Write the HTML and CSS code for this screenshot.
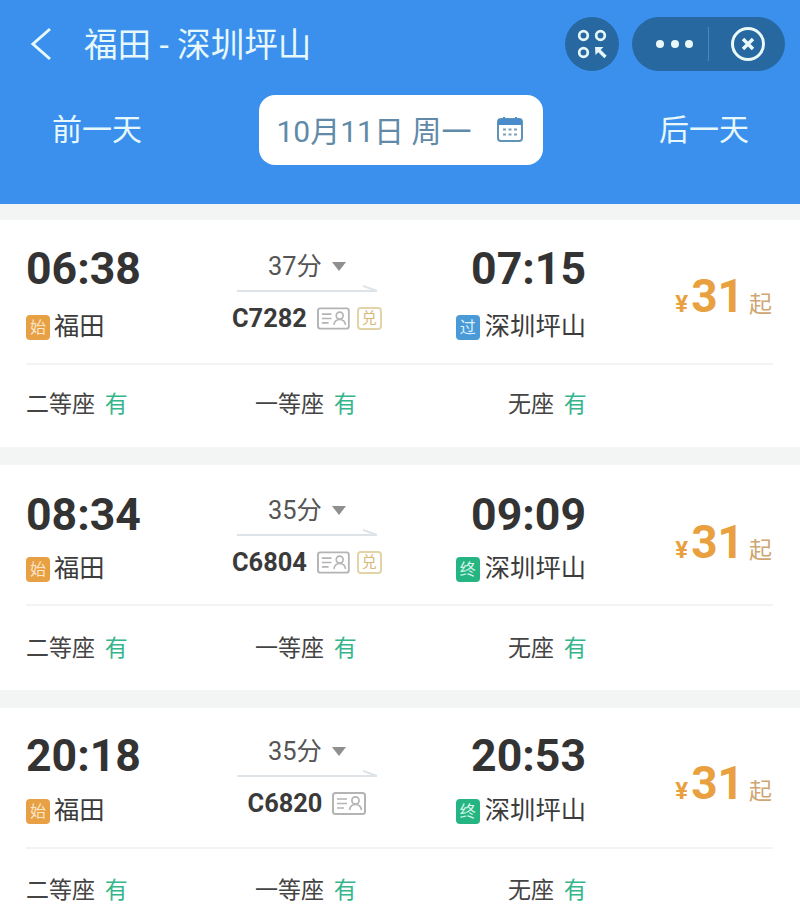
FILE: index.html
```html
<!DOCTYPE html>
<html>

<head>
    <title>福田 - 深圳坪山</title>
    <link rel="stylesheet" href="styles.css">
</head>

<body>
    <svg class="sprites" width="0" height="0">
        <symbol id="idcard" viewBox="0 0 34 23">
            <rect x="1" y="1" width="32" height="21" rx="2.5" fill="none" stroke="#b4b4b4" stroke-width="2" />
            <path d="M5 7h10M5 11.500h10M5 16h7" fill="none" stroke="#b4b4b4" stroke-width="1.7" />
            <circle cx="23.500" cy="8.500" r="3.600" fill="none" stroke="#b4b4b4" stroke-width="1.700" />
            <path d="M17.500 18c.6-4 3-5.500 6-5.500s5.400 1.500 6 5.500" fill="none" stroke="#b4b4b4" stroke-width="1.700" />
        </symbol>
    </svg>

    <header class="topbar">
        <div class="nav-row">
            <svg class="back" width="24" height="34" viewBox="0 0 24 34">
                <path d="M21 2 L4 17 L21 32" fill="none" stroke="#e6f8fb" stroke-width="3" />
            </svg>
            <h1 class="route">福田 - 深圳坪山</h1>
            <div class="round-btn">
                <svg width="32" height="32" viewBox="0 0 32 32">
                    <circle cx="7.500" cy="7.500" r="4.300" fill="none" stroke="#e6f6f8" stroke-width="2.700" />
                    <circle cx="24.500" cy="7.500" r="4.300" fill="none" stroke="#e6f6f8" stroke-width="2.700" />
                    <circle cx="7.500" cy="24.500" r="4.300" fill="none" stroke="#e6f6f8" stroke-width="2.700" />
                    <path d="M19 19h8.500l-2.800 2.800 6 6-2.400 2.400-6-6-2.800 2.800z" fill="#e6f6f8" />
                </svg>
            </div>
            <div class="capsule">
                <div class="dots"><i></i><i></i><i></i></div>
                <div class="capsule-sep"></div>
                <svg width="36" height="36" viewBox="0 0 36 36">
                    <circle cx="18" cy="18" r="15.500" fill="none" stroke="#eaf8f8" stroke-width="3" />
                    <path d="M13 13l10 10M23 13l-10 10" fill="none" stroke="#eaf8f8" stroke-width="3.500" />
                </svg>
            </div>
        </div>
        <div class="date-row">
            <span class="day-link">前一天</span>
            <div class="date-pill">
                <span>10月11日 周一</span>
                <svg width="28" height="26" viewBox="0 0 28 26">
                    <rect x="2" y="3" width="24" height="22" rx="3" fill="none" stroke="#5f93b8" stroke-width="2" />
                    <path d="M2 5.500a2.500 2.500 0 0 1 2.500-2.500h19a2.500 2.500 0 0 1 2.500 2.500v3.500h-24z" fill="#4a8ccb" />
                    <path d="M8 1v4M20 1v4" stroke="#4a8ccb" stroke-width="2" />
                    <path d="M7 13.500h3M12.500 13.500h3M18 13.500h3M7 18.500h3M12.500 18.500h3M18 18.500h3" stroke="#7f9fb5" stroke-width="2" />
                </svg>
            </div>
            <span class="day-link">后一天</span>
        </div>
    </header>

    <main class="list">
        <section class="train train-first">
            <div class="train-info">
                <div class="stop">
                    <div class="time">06:38</div>
                    <div class="station"><span class="tag tag-start">始</span>福田</div>
                </div>
                <div class="middle">
                    <div class="duration">37分<i class="caret"></i></div>
                    <div class="arrow-line"></div>
                    <div class="code">C7282<svg class="idcard"><use href="#idcard" /></svg><span class="dui">兑</span></div>
                </div>
                <div class="stop stop-end">
                    <div class="time">07:15</div>
                    <div class="station"><span class="tag tag-pass">过</span>深圳坪山</div>
                </div>
                <div class="price"><small>¥</small><b>31</b><em>起</em></div>
            </div>
            <div class="seats">
                <span>二等座 <u>有</u></span>
                <span>一等座 <u>有</u></span>
                <span>无座 <u>有</u></span>
            </div>
        </section>

        <section class="train train-second">
            <div class="train-info">
                <div class="stop">
                    <div class="time">08:34</div>
                    <div class="station"><span class="tag tag-start">始</span>福田</div>
                </div>
                <div class="middle">
                    <div class="duration">35分<i class="caret"></i></div>
                    <div class="arrow-line"></div>
                    <div class="code">C6804<svg class="idcard"><use href="#idcard" /></svg><span class="dui">兑</span></div>
                </div>
                <div class="stop stop-end">
                    <div class="time">09:09</div>
                    <div class="station"><span class="tag tag-end">终</span>深圳坪山</div>
                </div>
                <div class="price"><small>¥</small><b>31</b><em>起</em></div>
            </div>
            <div class="seats">
                <span>二等座 <u>有</u></span>
                <span>一等座 <u>有</u></span>
                <span>无座 <u>有</u></span>
            </div>
        </section>

        <section class="train train-third">
            <div class="train-info">
                <div class="stop">
                    <div class="time">20:18</div>
                    <div class="station"><span class="tag tag-start">始</span>福田</div>
                </div>
                <div class="middle">
                    <div class="duration">35分<i class="caret"></i></div>
                    <div class="arrow-line"></div>
                    <div class="code">C6820<svg class="idcard"><use href="#idcard" /></svg></div>
                </div>
                <div class="stop stop-end">
                    <div class="time">20:53</div>
                    <div class="station"><span class="tag tag-end">终</span>深圳坪山</div>
                </div>
                <div class="price"><small>¥</small><b>31</b><em>起</em></div>
            </div>
            <div class="seats">
                <span>二等座 <u>有</u></span>
                <span>一等座 <u>有</u></span>
                <span>无座 <u>有</u></span>
            </div>
        </section>
    </main>
</body>

</html>
```

FILE: styles.css
```css
* {
    padding: 0;
    margin: 0;
    box-sizing: border-box;
}

html,
body {
    height: 100%;
    overflow: hidden;
}

body {
    background-color: #f3f4f4;
    font-family: Roboto, "Noto Sans CJK SC", sans-serif;
    color: #333;
}

.sprites {
    display: block;
    height: 0;
}

.topbar {
    height: 204px;
    background-color: #3a90ec;
    color: #e6f8fb;
    padding-top: 17px;
}

.nav-row {
    display: flex;
    align-items: center;
    height: 54px;
    padding: 0 15px 0 29px;
}

.route {
    font-size: 33.6px;
    font-weight: 400;
    margin-left: 31px;
    padding-bottom: 4px;
    flex: 1;
}

.round-btn {
    width: 54px;
    height: 54px;
    border-radius: 50%;
    background-color: #26689f;
    display: flex;
    align-items: center;
    justify-content: center;
    margin-right: 13px;
}

.capsule {
    width: 153px;
    height: 54px;
    border-radius: 27px;
    background-color: #26689f;
    display: flex;
    align-items: center;
    padding-left: 24px;
}

.dots {
    display: flex;
    gap: 6.5px;
}

.dots i {
    width: 8px;
    height: 8px;
    border-radius: 50%;
    background-color: #eaf8f8;
}

.capsule-sep {
    width: 1px;
    height: 34px;
    background-color: #4e86b6;
    margin: 0 21px 0 15px;
}

.date-row {
    display: flex;
    align-items: center;
    justify-content: space-between;
    margin-top: 24px;
    padding: 0 51px 0 52px;
}

.day-link {
    font-size: 30px;
    line-height: 70px;
}

.date-pill {
    width: 284px;
    height: 70px;
    background-color: #fff;
    border-radius: 16px;
    display: flex;
    align-items: center;
    justify-content: space-between;
    padding: 0 19px 3px 18px;
    font-size: 30px;
    color: #5f8aa8;
}

.list {
    padding-top: 16px;
    display: flex;
    flex-direction: column;
    gap: 18px;
}

.train {
    background-color: #fff;
    height: 225px;
    padding: 26px 27px 0 26px;
}

.train-info {
    display: grid;
    grid-template-columns: 206px 150px 204px 1fr;
    border-bottom: 2px solid #f1f4f3;
}

/* the three rows are not quite the same height in the capture */
.train-first {
    height: 227px;
}

.train-first .train-info {
    height: 119px;
}

.train-first .station {
    margin-top: 19px;
}

.train-first .seats {
    margin-top: 24px;
}

.train-second {
    padding-top: 27px;
}

.train-second .train-info {
    height: 114px;
}

.train-second .station {
    margin-top: 15px;
}

.train-second .seats {
    margin-top: 27px;
}

.train-second .middle {
    margin-top: -2px;
}

.train-third {
    padding-top: 25px;
    height: 213px;
}

.train-third .train-info {
    height: 116px;
}

.train-third .station {
    margin-top: 16px;
}

.train-third .seats {
    margin-top: 26px;
}

.train-third .middle {
    margin-top: -2px;
}

.time {
    font-size: 44.6px;
    font-weight: 700;
    line-height: 46px;
    color: #333;
}

.stop-end {
    text-align: right;
}

.station {
    display: flex;
    align-items: center;
    font-size: 25.3px;
    line-height: 32px;
    color: #3c3c3c;
}

.stop-end .station {
    justify-content: flex-end;
}

.tag {
    width: 24px;
    height: 25px;
    border-radius: 4px;
    margin-right: 4px;
    font-size: 16px;
    line-height: 25px;
    text-align: center;
    color: #f8e6c8;
}

.stop-end .tag {
    margin-right: 5px;
}

.tag-start {
    background-color: #e8a045;
}

.tag-pass {
    background-color: #4a9ad8;
    color: #dff2fb;
}

.tag-end {
    background-color: #25b583;
    color: #dcf7ec;
}

.middle {
    text-align: center;
}

.duration {
    font-size: 25.4px;
    line-height: 28px;
    color: #555;
    display: flex;
    align-items: center;
    justify-content: center;
    gap: 10px;
    margin-top: 6px;
}

.caret {
    width: 0;
    height: 0;
    border-left: 7px solid transparent;
    border-right: 7px solid transparent;
    border-top: 9px solid #8f8f8f;
}

.arrow-line {
    position: relative;
    width: 140px;
    height: 2px;
    margin: 10px 0 0 5px;
    background-color: #dde3e6;
}

.arrow-line::after {
    content: "";
    position: absolute;
    right: 0;
    top: 0;
    width: 15px;
    height: 2px;
    background-color: #dde3e6;
    transform-origin: right center;
    transform: rotate(20deg);
}

.code {
    display: flex;
    align-items: center;
    justify-content: center;
    font-size: 25.4px;
    font-weight: 700;
    line-height: 30px;
    margin-top: 11px;
    color: #3a3a3a;
}

.idcard {
    width: 34px;
    height: 23px;
    margin-left: 10px;
}

.dui {
    width: 26px;
    height: 23px;
    margin-left: 7px;
    border: 2px solid #e2d3a8;
    border-radius: 4px;
    font-size: 15px;
    font-weight: 400;
    line-height: 19px;
    color: #d8b877;
}

.price {
    display: flex;
    align-items: baseline;
    justify-content: flex-end;
    color: #e9a03e;
    padding: 24px 1px 0 0;
    line-height: 52px;
    height: 76px;
}

.price small {
    font-size: 24px;
    font-weight: 700;
}

.price b {
    font-size: 46px;
    margin: 0 5px 0 3px;
}

.price em {
    font-size: 23px;
    font-style: normal;
    color: #cfa672;
}

.seats {
    display: grid;
    grid-template-columns: 229px 253px 1fr;
    font-size: 23px;
    line-height: 32px;
    color: #444;
}

.seats u {
    text-decoration: none;
    color: #36b58c;
    margin-left: 4px;
}
```
